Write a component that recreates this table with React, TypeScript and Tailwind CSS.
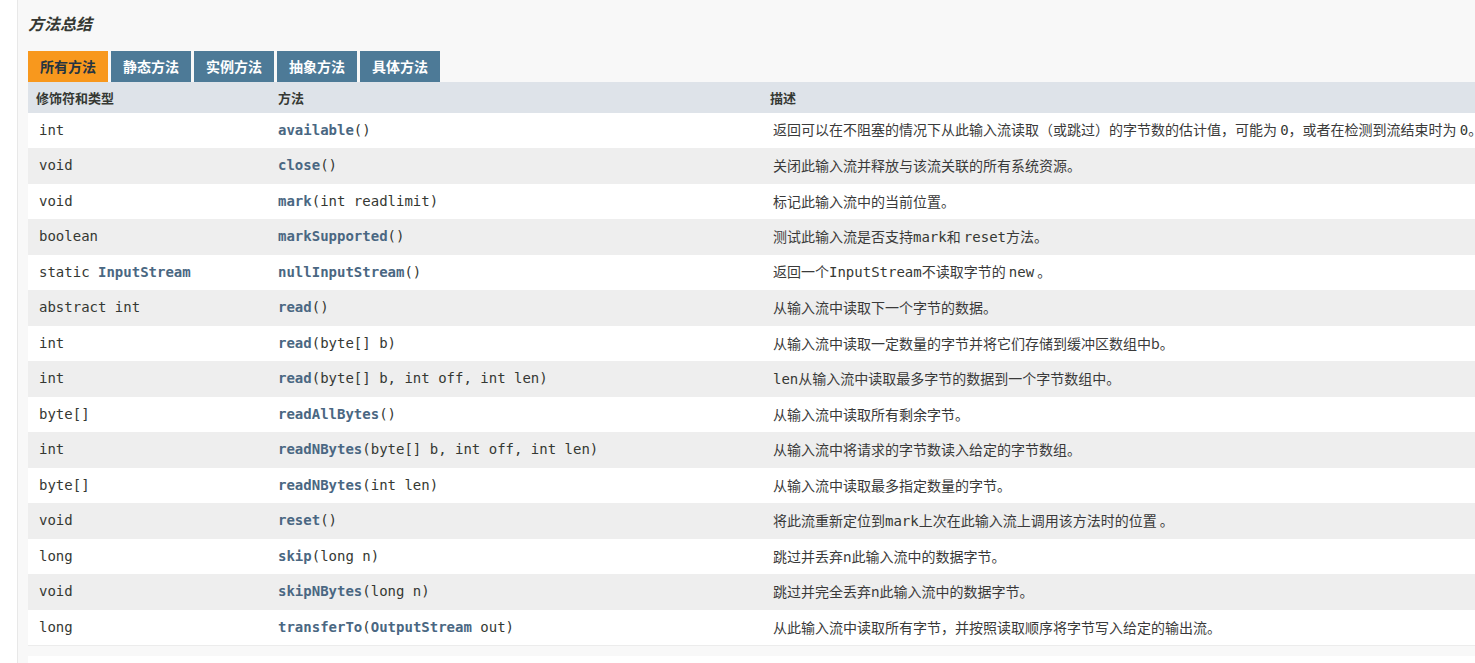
import React from "react";

const MONO = "font-['DejaVu_Sans_Mono',monospace]";

type Part = string | { m: string };

const rows: { type: React.ReactNode; method: React.ReactNode; desc: Part[] }[] = [
  { type: "int", method: <><b className="text-[#4a6782]">available</b>()</>, desc: ["返回可以在不阻塞的情况下从此输入流读取（或跳过）的字节数的估计值，可能为 ", { m: "0" }, "，或者在检测到流结束时为 ", { m: "0" }, "。"] },
  { type: "void", method: <><b className="text-[#4a6782]">close</b>()</>, desc: ["关闭此输入流并释放与该流关联的所有系统资源。"] },
  { type: "void", method: <><b className="text-[#4a6782]">mark</b>(int readlimit)</>, desc: ["标记此输入流中的当前位置。"] },
  { type: "boolean", method: <><b className="text-[#4a6782]">markSupported</b>()</>, desc: ["测试此输入流是否支持", { m: "mark" }, "和 ", { m: "reset" }, "方法。"] },
  { type: <>static <b className="text-[#4a6782]">InputStream</b></>, method: <><b className="text-[#4a6782]">nullInputStream</b>()</>, desc: ["返回一个", { m: "InputStream" }, "不读取字节的 ", { m: "new" }, " 。"] },
  { type: "abstract int", method: <><b className="text-[#4a6782]">read</b>()</>, desc: ["从输入流中读取下一个字节的数据。"] },
  { type: "int", method: <><b className="text-[#4a6782]">read</b>(byte[] b)</>, desc: ["从输入流中读取一定数量的字节并将它们存储到缓冲区数组中b。"] },
  { type: "int", method: <><b className="text-[#4a6782]">read</b>(byte[] b, int off, int len)</>, desc: [{ m: "len" }, "从输入流中读取最多字节的数据到一个字节数组中。"] },
  { type: "byte[]", method: <><b className="text-[#4a6782]">readAllBytes</b>()</>, desc: ["从输入流中读取所有剩余字节。"] },
  { type: "int", method: <><b className="text-[#4a6782]">readNBytes</b>(byte[] b, int off, int len)</>, desc: ["从输入流中将请求的字节数读入给定的字节数组。"] },
  { type: "byte[]", method: <><b className="text-[#4a6782]">readNBytes</b>(int len)</>, desc: ["从输入流中读取最多指定数量的字节。"] },
  { type: "void", method: <><b className="text-[#4a6782]">reset</b>()</>, desc: ["将此流重新定位到", { m: "mark" }, "上次在此输入流上调用该方法时的位置 。"] },
  { type: "long", method: <><b className="text-[#4a6782]">skip</b>(long n)</>, desc: ["跳过并丢弃n此输入流中的数据字节。"] },
  { type: "void", method: <><b className="text-[#4a6782]">skipNBytes</b>(long n)</>, desc: ["跳过并完全丢弃n此输入流中的数据字节。"] },
  { type: "long", method: <><b className="text-[#4a6782]">transferTo</b>(<b className="text-[#4a6782]">OutputStream</b> out)</>, desc: ["从此输入流中读取所有字节，并按照读取顺序将字节写入给定的输出流。"] },
];

const tabs = ["所有方法", "静态方法", "实例方法", "抽象方法", "具体方法"];

export default function App() {
  return (
    <div className="w-[1475px] h-[663px] overflow-hidden flex bg-white text-[#353833] font-['Noto_Sans_CJK_SC',sans-serif]">
      <div className="w-[18px] shrink-0 bg-white border-r border-[#e8e8e8]" />
      <div className="flex-1 min-w-0 bg-[#f8f8f8] pl-[10px] pt-[13px] flex flex-col">
        <div className="h-[20px] leading-[20px] text-[16px] font-bold italic">方法总结</div>
        <div className="mt-[18px] flex gap-[3px] h-[31px]">
          {tabs.map((t, i) => (
            <div
              key={t}
              className={
                "w-[80px] flex items-center justify-center text-[14px] font-bold " +
                (i === 0 ? "bg-[#f8981d] text-[#253441]" : "bg-[#4d7a97] text-white")
              }
            >
              {t}
            </div>
          ))}
        </div>
        <div className="w-[1700px] border-b border-[#ececec]">
          <div className="grid grid-cols-[242px_492px_1fr] h-[30.5px] bg-[#dee3e9] text-[13px] font-bold items-center">
            <div className="pl-[8px]">修饰符和类型</div>
            <div className="pl-[8px]">方法</div>
            <div className="pl-[8px]">描述</div>
          </div>
          {rows.map((r, i) => (
            <div
              key={i}
              className={
                "grid grid-cols-[242px_492px_1fr] h-[35.5px] items-center whitespace-nowrap " +
                (i % 2 === 0 ? "bg-white" : "bg-[#eeeeee]")
              }
            >
              <div className={"pl-[11px] text-[14px] " + MONO}>{r.type}</div>
              <div className={"pl-[8px] text-[14px] " + MONO}>{r.method}</div>
              <div className="pl-[11px] text-[14px] text-[#3a3a3a]">
                {r.desc.map((p, j) =>
                  typeof p === "string" ? (
                    <span key={j}>{p}</span>
                  ) : (
                    <span key={j} className={MONO + " text-[#353833]"}>{p.m}</span>
                  )
                )}
              </div>
            </div>
          ))}
        </div>
        <div className="mt-[10px] flex-1 bg-white" />
      </div>
    </div>
  );
}
